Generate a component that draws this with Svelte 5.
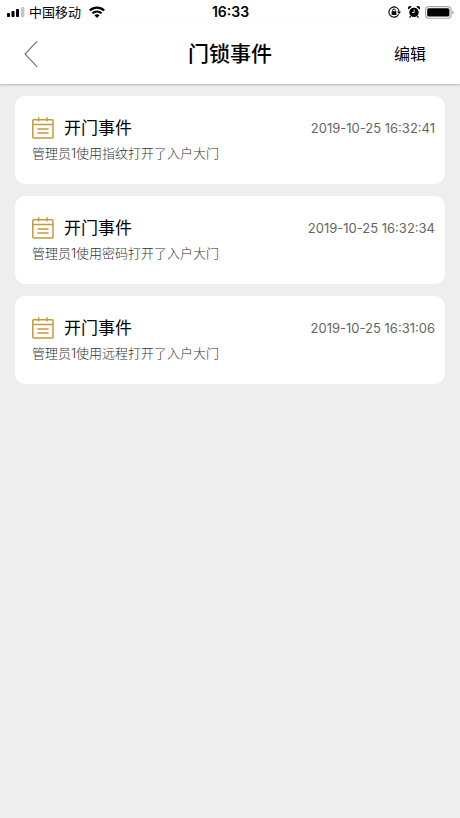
<script lang="ts">
  interface LockEvent {
    title: string;
    time: string;
    detail: string;
  }

  const events: LockEvent[] = [
    { title: "开门事件", time: "2019-10-25 16:32:41", detail: "管理员1使用指纹打开了入户大门" },
    { title: "开门事件", time: "2019-10-25 16:32:34", detail: "管理员1使用密码打开了入户大门" },
    { title: "开门事件", time: "2019-10-25 16:31:06", detail: "管理员1使用远程打开了入户大门" },
  ];
</script>

<div class="status-bar">
  <div class="status-left">
    <svg width="18" height="10" viewBox="0 0 18 10" aria-hidden="true">
      <rect x="0" y="6" width="3" height="4" rx="0.8" />
      <rect x="4.5" y="4" width="3" height="6" rx="0.8" />
      <rect x="9" y="2" width="3" height="8" rx="0.8" />
      <rect x="14" y="0" width="3.4" height="10" rx="0.8" fill="#c6c6c6" />
    </svg>
    <span class="carrier">中国移动</span>
    <svg class="wifi" width="16" height="12" viewBox="0 0 16 12" aria-hidden="true">
      <g fill="none" stroke="#000" stroke-width="2.1">
        <path d="M0.8 4.6C4.9 0.6 11.1 0.6 15.2 4.6" />
        <path d="M3.4 7.3C6 4.8 10 4.8 12.6 7.3" />
      </g>
      <path d="M5.4 9.3C6.9 7.9 9.1 7.9 10.6 9.3L8 11.9Z" />
    </svg>
  </div>
  <span class="clock">16:33</span>
  <div class="status-right">
    <svg width="13" height="12" viewBox="0 0 13 12" aria-hidden="true">
      <path d="M10.6 8.3A5.1 5.1 0 1 1 11.1 5.6" fill="none" stroke="#000" stroke-width="1.1" />
      <path d="M9.1 5.5H13L11.1 8.1Z" />
      <rect x="3.6" y="5.3" width="4.8" height="3.6" rx="0.5" />
      <path d="M4.6 5.6V4.4A1.4 1.4 0 0 1 7.4 4.4V5.6" fill="none" stroke="#000" stroke-width="0.9" />
    </svg>
    <svg width="12" height="12" viewBox="0 0 12 12" aria-hidden="true">
      <circle cx="6" cy="6.4" r="4.7" />
      <path d="M0.5 3.4A2 2 0 0 1 3.6 0.8ZM11.5 3.4A2 2 0 0 0 8.4 0.8Z" />
      <path d="M2.7 10.2L1.6 11.6M9.3 10.2L10.4 11.6" stroke="#000" stroke-width="1.3" />
      <path d="M6.2 3.6V6.6H4" fill="none" stroke="#fff" stroke-width="0.9" />
    </svg>
    <svg class="battery" width="29" height="13" viewBox="0 0 29 13" aria-hidden="true">
      <rect x="0.6" y="0.6" width="25.4" height="11.6" rx="3" fill="#fff" stroke="#a8a8a8" stroke-width="1.1" />
      <rect x="2.2" y="2.2" width="22.2" height="8.4" rx="1.5" />
      <path d="M27.2 4.4Q28.7 5 28.7 6.4Q28.7 7.8 27.2 8.4Z" fill="#a8a8a8" />
    </svg>
  </div>
</div>

<header class="nav-bar">
  <button class="back" aria-label="返回">
    <svg width="14" height="28" viewBox="0 0 14 28" aria-hidden="true">
      <path d="M13.2 1.2L1 14L13.2 26.8" fill="none" stroke="#777" stroke-width="1.2" />
    </svg>
  </button>
  <h1>门锁事件</h1>
  <button class="edit">编辑</button>
</header>

<main class="events">
  {#each events as event}
    <article class="card">
      <div class="card-head">
        <svg width="22" height="22" viewBox="0 0 22 22" aria-hidden="true">
          <g fill="none" stroke="#c49a3f" stroke-width="1.5">
            <rect x="0.8" y="2.8" width="20.2" height="18.2" rx="0.9" />
            <path d="M1 7.4H21M6.6 0.2V4.6M15 0.2V4.6M5.4 11.9H16.6M5.4 16H16.6" />
          </g>
        </svg>
        <h2>{event.title}</h2>
        <time>{event.time}</time>
      </div>
      <p>{event.detail}</p>
    </article>
  {/each}
</main>

<style>
  :global(body) {
    background: #eee;
    font-family: Inter, "Noto Sans CJK SC", sans-serif;
    color: #000;
  }

  .status-bar {
    display: grid;
    grid-template-columns: 1fr auto 1fr;
    align-items: center;
    height: 24px;
    padding: 0 6px 0 7px;
    background: #fff;
  }

  .status-left,
  .status-right {
    display: flex;
    align-items: center;
  }

  .status-left {
    gap: 4px;
  }

  .status-right {
    justify-content: flex-end;
    gap: 7px;
  }

  .carrier {
    font-size: 13px;
    line-height: 20px;
  }

  .wifi {
    margin-left: 4px;
  }

  .battery {
    margin-left: -2px;
  }

  .clock {
    font-size: 14px;
    font-weight: 600;
    line-height: 20px;
  }

  .nav-bar {
    position: relative;
    display: grid;
    grid-template-columns: 1fr auto 1fr;
    align-items: center;
    height: 60px;
    padding: 0 24px;
    background: #fff;
    box-shadow: 0 1px 2px rgba(0, 0, 0, 0.25);
  }

  button {
    padding: 0;
    border: 0;
    background: none;
    color: inherit;
    font-family: inherit;
    cursor: pointer;
  }

  .back {
    justify-self: start;
    display: flex;
  }

  h1 {
    margin: 0;
    font-size: 21px;
    font-weight: 500;
    line-height: 28px;
  }

  .edit {
    justify-self: end;
    padding: 0 10px;
    font-size: 16px;
    line-height: 24px;
  }

  .events {
    display: flex;
    flex-direction: column;
    gap: 12px;
    padding: 12px 15px;
  }

  .card {
    box-sizing: border-box;
    min-height: 88px;
    padding: 20px 10px 20px 17px;
    border-radius: 10px;
    background: #fff;
  }

  .card-head {
    display: flex;
    align-items: center;
    gap: 10px;
  }

  h2 {
    margin: 0;
    font-size: 17px;
    font-weight: 400;
    line-height: 24px;
  }

  time {
    margin-left: auto;
    font-size: 13px;
    line-height: 20px;
    color: #666;
  }

  p {
    margin: 3px 0 0;
    font-size: 13px;
    font-weight: 300;
    line-height: 20px;
    color: #333;
  }
</style>
